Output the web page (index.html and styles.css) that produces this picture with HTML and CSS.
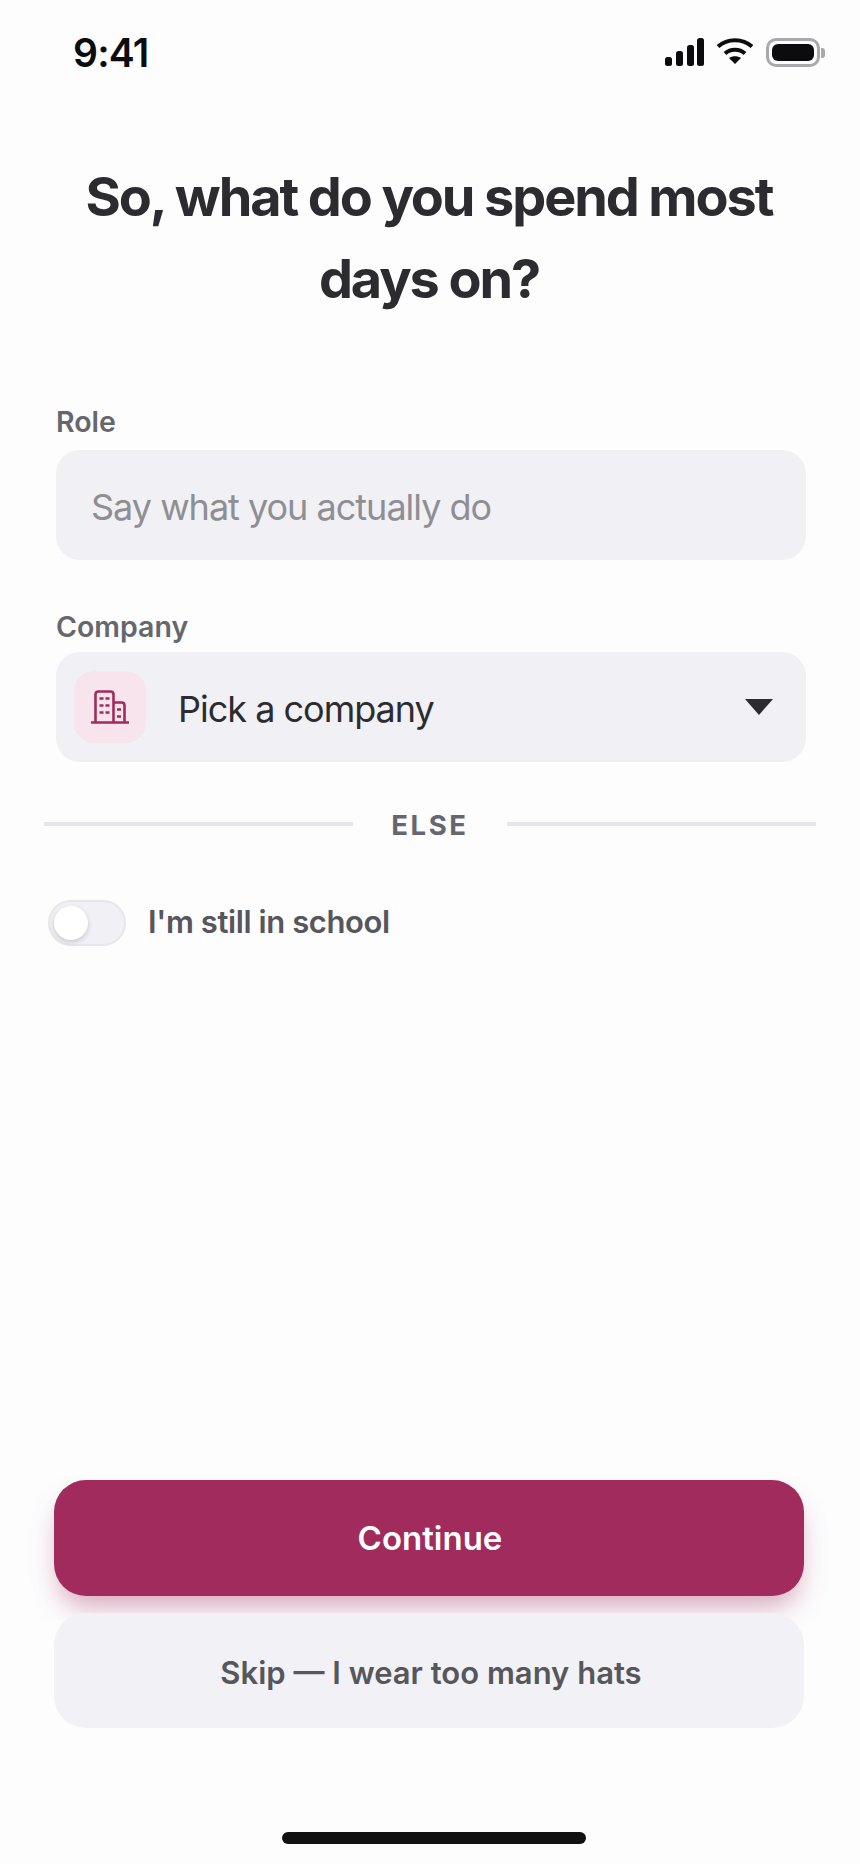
FILE: index.html
```html
<!DOCTYPE html>
<html lang="en">
<head>
<meta charset="UTF-8">
<meta name="viewport" content="width=device-width, initial-scale=1.0">
<title>Onboarding</title>
<link rel="stylesheet" href="styles.css">
</head>
<body>

<div class="screen">
  <div class="status-bar">
    <span class="time">9:41</span>
    <div class="status-icons">
      <svg class="signal" width="39" height="28" viewBox="0 0 39 28">
        <rect x="0" y="19" width="7" height="9" rx="2.5"/>
        <rect x="11" y="13" width="7" height="15" rx="2.5"/>
        <rect x="22" y="7" width="7" height="21" rx="2.5"/>
        <rect x="32" y="0" width="7" height="28" rx="2.5"/>
      </svg>
      <svg class="wifi" width="38" height="26" viewBox="0 0 38 26">
        <path d="M2 8.500C11.500 0 26.500 0 36 8.500" fill="none" stroke="#0c0c0e" stroke-width="4"/>
        <path d="M9 15.500C14.500 10.500 23.500 10.500 29 15.500" fill="none" stroke="#0c0c0e" stroke-width="4"/>
        <path d="M13 20C16.500 17.500 21.500 17.500 25 20L19 26Z" fill="#0c0c0e"/>
      </svg>
      <div class="battery">
        <div class="battery-body"><div class="battery-fill"></div></div>
        <div class="battery-nub"></div>
      </div>
    </div>
  </div>

  <h1 class="title">So, what do you spend most<br>days on?</h1>

  <div class="field role-field">
    <label class="field-label">Role</label>
    <div class="input placeholder"><span class="input-text">Say what you actually do</span></div>
  </div>

  <div class="field company-field">
    <label class="field-label">Company</label>
    <div class="input select">
      <div class="company-icon">
        <svg width="40" height="38" viewBox="0 0 40 38" fill="none" stroke="#a12b5c" stroke-width="2.600">
          <path d="M1 34.500H39"/>
          <path d="M5.500 34.500V6.500Q5.500 3.500 8.500 3.500H20.500Q23.500 3.500 23.500 6.500V34.500"/>
          <path d="M23.500 14.500H31.500Q34.500 14.500 34.500 17.500V34.500"/>
          <path d="M9.500 10.500H13.500M15.500 10.500H19.500M9.500 17.500H13.500M15.500 17.500H19.500M9.500 24.500H13.500M15.500 24.500H19.500M27 21.500H31M27 28.500H31"/>
        </svg>
      </div>
      <span class="select-text">Pick a company</span>
      <div class="caret"></div>
    </div>
  </div>

  <div class="divider">
    <div class="divider-line"></div>
    <span class="divider-text">ELSE</span>
    <div class="divider-line"></div>
  </div>

  <div class="school-row">
    <div class="toggle"><div class="knob"></div></div>
    <span class="school-text">I'm still in school</span>
  </div>

  <div class="actions">
    <button class="btn btn-primary">Continue</button>
    <button class="btn btn-secondary">Skip — I wear too many hats</button>
  </div>

  <div class="home-bar"></div>
</div>

</body>
</html>
```

FILE: styles.css
```css
body {
  font-family: Inter, "Liberation Sans", sans-serif;
  background-color: #fdfdfe;
  margin: 0;
  padding: 0;
}

.screen {
  height: 1864px;
  display: flex;
  flex-direction: column;
  overflow: hidden;
}

.status-bar {
  display: flex;
  justify-content: space-between;
  align-items: flex-start;
  padding: 30px 35px 0 73px;
  height: 156px;
  box-sizing: border-box;
}

.time {
  font-size: 39px;
  font-weight: 600;
  line-height: 46px;
  letter-spacing: -0.8px;
  color: #0c0c0e;
}

.status-icons {
  display: flex;
  align-items: flex-start;
  gap: 12px;
  padding-top: 8px;
}

.signal {
  fill: #0c0c0e;
}

.battery {
  display: flex;
  align-items: center;
}

.battery-body {
  width: 54px;
  height: 29px;
  box-sizing: border-box;
  border: 3px solid #a9a9ab;
  border-radius: 10px;
  padding: 3px;
}

.battery-fill {
  height: 100%;
  background-color: #0c0c0e;
  border-radius: 6px;
}

.battery-nub {
  width: 4px;
  height: 10px;
  margin-left: 1px;
  background-color: #a9a9ab;
  border-radius: 0 3px 3px 0;
}

.title {
  margin: 0;
  padding-right: 2px;
  font-size: 54px;
  font-weight: 700;
  line-height: 82px;
  letter-spacing: -2.1px;
  text-align: center;
  color: #2c2c30;
}

.field {
  margin: 0 54px 0 56px;
}

.role-field {
  margin-top: 85px;
}

.company-field {
  margin-top: 50px;
}

.field-label {
  display: block;
  font-size: 28.5px;
  font-weight: 600;
  line-height: 34px;
  margin-bottom: 8px;
  color: #66666e;
}

.role-field .field-label {
  margin-bottom: 11px;
}

.input {
  height: 110px;
  box-sizing: border-box;
  background-color: #f1f1f5;
  border-radius: 24px;
  display: flex;
  align-items: center;
  font-size: 36px;
  letter-spacing: -1px;
}

.placeholder {
  padding-left: 35px;
  color: #8e8e93;
}

.input-text {
  padding-top: 3px;
}

.select {
  padding: 0 33px 0 18px;
  color: #2c2c30;
}

.company-icon {
  width: 72px;
  height: 72px;
  background-color: #f7e4ec;
  border-radius: 20px;
  display: flex;
  align-items: center;
  justify-content: center;
}

.select-text {
  flex: 1;
  margin-left: 32px;
  padding-top: 3px;
}

.caret {
  width: 0;
  height: 0;
  border-left: 14px solid transparent;
  border-right: 14px solid transparent;
  border-top: 16px solid #2c2c30;
}

.divider {
  display: flex;
  align-items: center;
  margin: 44px 44px 0;
  height: 36px;
}

.divider-line {
  flex: 1;
  height: 4px;
  background-color: #e5e5ea;
}

.divider-text {
  width: 154px;
  padding-top: 2px;
  text-align: center;
  font-size: 27.5px;
  font-weight: 700;
  letter-spacing: 2.6px;
  color: #66666e;
}

.school-row {
  display: flex;
  align-items: center;
  gap: 22px;
  margin: 58px 0 0 48px;
}

.toggle {
  width: 78px;
  height: 46px;
  box-sizing: border-box;
  background-color: #f1f1f5;
  border: 2px solid #e6e6eb;
  border-radius: 23px;
  padding: 4px;
}

.knob {
  width: 34px;
  height: 34px;
  border-radius: 50%;
  background-color: #fff;
  box-shadow: 0 2px 5px rgba(0, 0, 0, 0.18);
}

.school-text {
  font-size: 31px;
  font-weight: 600;
  line-height: 36px;
  letter-spacing: -0.4px;
  margin-top: -2px;
  color: #56565c;
}

.actions {
  margin: auto 56px 0 54px;
  display: flex;
  flex-direction: column;
  gap: 17px;
}

.btn {
  height: 116px;
  border: none;
  border-radius: 32px;
  font-family: inherit;
  font-size: 33px;
  font-weight: 600;
  cursor: pointer;
}

.btn-primary {
  padding-left: 8px;
  background-color: #a12b5c;
  color: #fff;
  box-shadow: 0 16px 28px -6px rgba(161, 43, 92, 0.42);
}

.btn-secondary {
  height: 115px;
  padding: 4px 0 0 4px;
  background-color: #f2f2f6;
  color: #56565c;
  font-size: 31px;
}

.home-bar {
  width: 304px;
  height: 12px;
  margin: 104px 0 20px 282px;
  background-color: #111;
  border-radius: 6px;
}
```
